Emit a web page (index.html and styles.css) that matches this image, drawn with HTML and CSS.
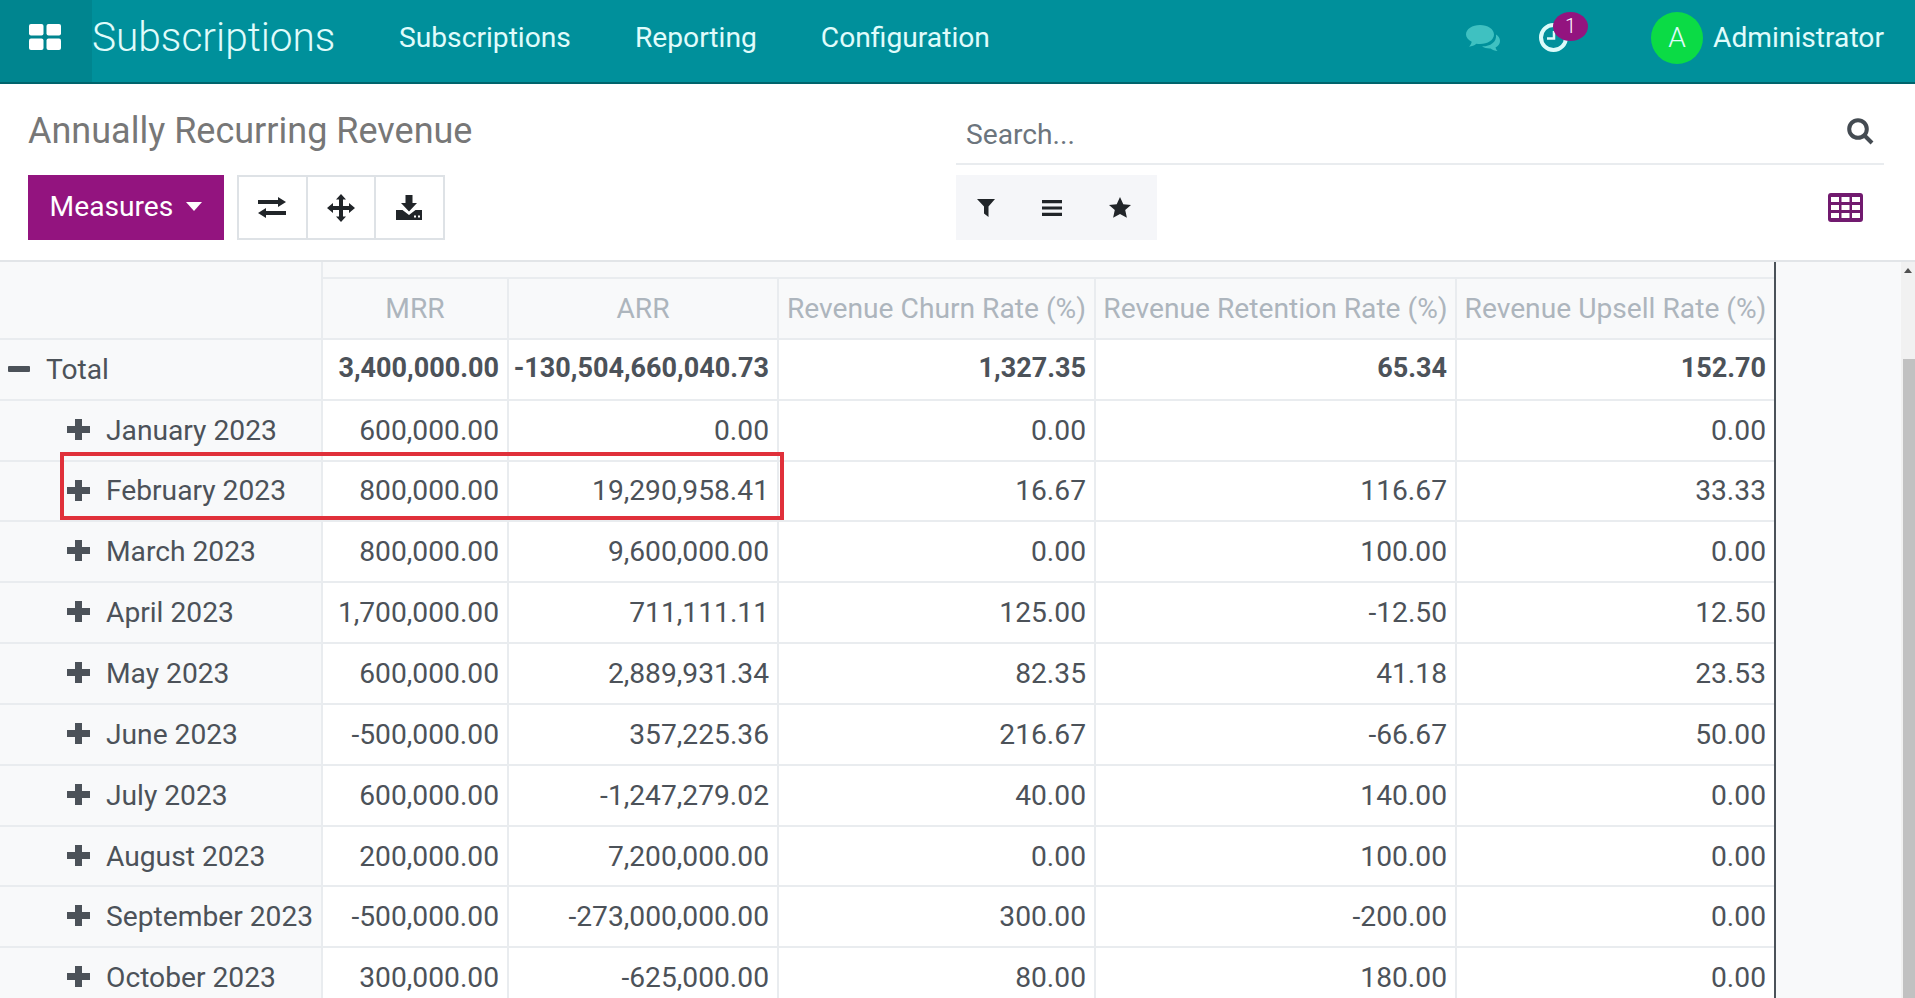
FILE: index.html
```html
<!DOCTYPE html>
<html lang="en">
<head>
<meta charset="utf-8">
<title>Annually Recurring Revenue</title>
<link rel="stylesheet" href="styles.css">
</head>
<body>
<header class="topbar">
  <div class="apps"><svg class="apps-icon" viewBox="0 0 32 26"><rect x="0" y="0" width="14.5" height="11.5" rx="2"/><rect x="17.5" y="0" width="14.5" height="11.5" rx="2"/><rect x="0" y="14.5" width="14.5" height="11.5" rx="2"/><rect x="17.5" y="14.5" width="14.5" height="11.5" rx="2"/></svg></div>
  <div class="brand">Subscriptions</div>
  <nav class="menu"><a>Subscriptions</a><a>Reporting</a><a>Configuration</a></nav>
  <div class="systray">
    <svg class="chat" viewBox="0 0 34 26"><path d="M14 0c7.700 0 14 4 14 9.600S21.700 19 14 19c-1.300 0-2.500-.1-3.700-.3C8.300 20.400 5.900 21.300 3 21.700c1.300-1.400 2.300-3 2.700-5C2.200 15 0 12.500 0 9.600 0 4 6.300 0 14 0z"/><path d="M30 9.500c2.500 1.600 4 3.900 4 6.500 0 2.800-1.700 5.100-4.500 6.600.3 1.400 1 2.500 2 3.400-2.700-.2-5-1.100-6.900-2.500-3.200.2-6.500-.6-8.600-2.200 7.500.3 15-3.700 14-11.800z"/></svg>
    <div class="activity">
      <svg class="clock" viewBox="0 0 29 29"><circle cx="14.500" cy="14.500" r="12.500"/><path d="M15 8v7.500H8"/></svg>
      <span class="badge">1</span>
    </div>
    <div class="avatar">A</div>
    <span class="username">Administrator</span>
  </div>
</header>

<section class="control-panel">
  <div class="cp-left">
    <h1 class="page-title">Annually Recurring Revenue</h1>
    <div class="buttons">
      <button class="measures">Measures<span class="caret"></span></button>
      <div class="btn-group">
        <button class="icon-btn"><svg class="ico-swap" viewBox="0 0 28 21"><path d="M0 3h20V0l8 5-8 5V7H0z"/><path d="M28 14H8v-3l-8 5 8 5v-3h20z"/></svg></button>
        <button class="icon-btn"><svg class="ico-move" viewBox="0 0 28 28"><path d="M14 0l5 5.500h-3V12h6V9l6 5-6 5v-3h-6v6.500h3L14 28l-5-5.500h3V16H6v3l-6-5 6-5v3h6V5.500H9z"/></svg></button>
        <button class="icon-btn"><svg class="ico-save" viewBox="0 0 26 25"><path d="M9.500 0h7v8H21l-8 8.500L5 8h4.500z"/><path d="M0 15h6.500l6.500 5 6.500-5H26v10H0z"/><rect x="18" y="20.500" width="2" height="2" fill="#fff"/><rect x="22" y="20.500" width="2" height="2" fill="#fff"/></svg></button>
      </div>
    </div>
  </div>
  <div class="cp-right">
    <div class="search">
      <span class="placeholder">Search...</span>
      <svg class="search-icon" viewBox="0 0 27 27"><circle cx="11" cy="11" r="8.800"/><path d="M17.500 17.500l7.500 7.500"/></svg>
    </div>
    <div class="cp-tools">
      <div class="filters">
        <svg class="ico-filter" viewBox="0 0 18 18"><path d="M0 0h18l-6.500 7.500V18L7 14.500v-7z"/></svg>
        <svg class="ico-bars" viewBox="0 0 20 16"><path d="M0 0h20v3.200H0zM0 6.400h20v3.200H0zM0 12.800h20V16H0z"/></svg>
        <svg class="ico-star" viewBox="0 0 22 21"><path d="M11 0l3.300 7.200 7.700.8-5.800 5.100 1.700 7.700L11 16.900 4.100 20.800l1.700-7.700L0 8l7.700-.8z"/></svg>
      </div>
      <svg class="view-icon" viewBox="0 0 35 29"><rect width="35" height="29" rx="3"/><g fill="#fff"><rect x="3" y="4" width="8" height="5"/><rect x="13.500" y="4" width="8" height="5"/><rect x="24" y="4" width="8" height="5"/><rect x="3" y="12" width="8" height="5"/><rect x="13.500" y="12" width="8" height="5"/><rect x="24" y="12" width="8" height="5"/><rect x="3" y="20" width="8" height="5"/><rect x="13.500" y="20" width="8" height="5"/><rect x="24" y="20" width="8" height="5"/></g></svg>
    </div>
  </div>
</section>

<main class="content">
  <div class="pivot-wrap">
    <table class="pivot">
      <colgroup><col class="c0"><col class="c1"><col class="c2"><col class="c3"><col class="c4"><col class="c5"></colgroup>
      <thead>
        <tr class="band"><th rowspan="2"></th><th colspan="5"></th></tr>
        <tr class="heads"><th>MRR</th><th>ARR</th><th>Revenue Churn Rate (%)</th><th>Revenue Retention Rate (%)</th><th>Revenue Upsell Rate (%)</th></tr>
      </thead>
      <tbody>
        <tr class="total"><th><span class="minus"></span>Total</th><td>3,400,000.00</td><td>-130,504,660,040.73</td><td>1,327.35</td><td>65.34</td><td>152.70</td></tr>
        <tr><th><span class="plus"></span>January 2023</th><td>600,000.00</td><td>0.00</td><td>0.00</td><td></td><td>0.00</td></tr>
        <tr><th><span class="plus"></span>February 2023</th><td>800,000.00</td><td>19,290,958.41</td><td>16.67</td><td>116.67</td><td>33.33</td></tr>
        <tr><th><span class="plus"></span>March 2023</th><td>800,000.00</td><td>9,600,000.00</td><td>0.00</td><td>100.00</td><td>0.00</td></tr>
        <tr><th><span class="plus"></span>April 2023</th><td>1,700,000.00</td><td>711,111.11</td><td>125.00</td><td>-12.50</td><td>12.50</td></tr>
        <tr><th><span class="plus"></span>May 2023</th><td>600,000.00</td><td>2,889,931.34</td><td>82.35</td><td>41.18</td><td>23.53</td></tr>
        <tr><th><span class="plus"></span>June 2023</th><td>-500,000.00</td><td>357,225.36</td><td>216.67</td><td>-66.67</td><td>50.00</td></tr>
        <tr><th><span class="plus"></span>July 2023</th><td>600,000.00</td><td>-1,247,279.02</td><td>40.00</td><td>140.00</td><td>0.00</td></tr>
        <tr><th><span class="plus"></span>August 2023</th><td>200,000.00</td><td>7,200,000.00</td><td>0.00</td><td>100.00</td><td>0.00</td></tr>
        <tr><th><span class="plus"></span>September 2023</th><td>-500,000.00</td><td>-273,000,000.00</td><td>300.00</td><td>-200.00</td><td>0.00</td></tr>
        <tr><th><span class="plus"></span>October 2023</th><td>300,000.00</td><td>-625,000.00</td><td>80.00</td><td>180.00</td><td>0.00</td></tr>
      </tbody>
    </table>
    <div class="highlight"></div>
  </div>
  <div class="scrollbar"><span class="arrow"></span><div class="thumb"></div></div>
</main>
</body>
</html>
```

FILE: styles.css
```css
* { box-sizing: border-box; }
html, body { margin: 0; height: 100%; overflow: hidden; }
body { font-family: Roboto, "Liberation Sans", sans-serif; font-size: 28.2px; color: #4c5259; background: #fff; display: flex; flex-direction: column; height: 998px; }

.topbar { height: 84px; flex: none; display: flex; align-items: center; background: #00909b; border-bottom: 2px solid #00646c; color: #e0fcfb; padding-bottom: 7px; }
.apps { width: 92px; height: 82px; margin-bottom: -7px; padding: 0 3px 9px 0; background: #00858f; display: flex; align-items: center; justify-content: center; flex: none; }
.apps-icon { width: 32px; height: 26px; fill: #fff; }
.brand { font-size: 40.6px; font-weight: 300; width: 307px; white-space: nowrap; margin-top: -2px; }
.menu { display: flex; gap: 64px; }
.systray { margin-left: auto; display: flex; align-items: center; padding-right: 31px; }
.chat { width: 34px; height: 26px; fill: #3fc1c1; margin-right: 38px; }
.activity { position: relative; width: 49px; height: 30px; margin-right: 63px; margin-left: 1px; }
.clock { width: 29px; height: 29px; fill: none; stroke: #dcfbfa; stroke-width: 4; display: block; }
.clock path { stroke-width: 2.500; }
.badge { position: absolute; left: 14px; top: -11px; width: 35px; height: 29px; border-radius: 50%; background: #93147f; font-size: 20px; font-weight: 300; display: flex; align-items: center; justify-content: center; color: #fff; }
.avatar { width: 52px; height: 52px; border-radius: 50%; background: #0bdb45; display: flex; align-items: center; justify-content: center; margin-right: 10px; font-weight: 300; }

.control-panel { height: 176px; flex: none; display: flex; justify-content: space-between; padding: 0 31px 0 28px; }
.cp-left { display: flex; flex-direction: column; }
.page-title { margin: 25px 0 0; height: 66px; font-size: 36px; font-weight: 400; color: #777; line-height: 44px; }
.buttons { display: flex; gap: 13px; }
.measures { width: 196px; height: 65px; border: 0; background: #93147f; color: #fff; font: 28.2px Roboto, sans-serif; display: flex; align-items: center; justify-content: center; gap: 13px; padding: 0 0 2px; }
.caret { width: 0; height: 0; border-left: 8px solid transparent; border-right: 8px solid transparent; border-top: 9px solid #fff; }
.btn-group { display: flex; }
.icon-btn { width: 70.500px; height: 65px; background: #fff; border: 2px solid #dee2e6; margin-left: -2px; display: flex; align-items: center; justify-content: center; padding: 0; }
.icon-btn:first-child { margin-left: 0; }
.icon-btn svg { fill: #212529; }
.ico-swap { width: 28px; height: 21px; }
.ico-move { width: 28px; height: 28px; }
.ico-save { width: 26px; height: 25px; }

.cp-right { width: 928px; display: flex; flex-direction: column; }
.search { height: 81px; border-bottom: 2px solid #e9ecef; display: flex; align-items: center; justify-content: space-between; padding: 21px 10px 0 10px; }
.placeholder { color: #6c757d; }
.search-icon { width: 27px; height: 27px; fill: none; stroke: #444b52; stroke-width: 4; margin-top: -6px; }
.cp-tools { margin-top: 10px; display: flex; justify-content: space-between; align-items: center; }
.filters { width: 201px; height: 65px; background: #f5f6f9; display: flex; align-items: center; padding-left: 21px; gap: 47px; }
.filters svg { fill: #212529; }
.ico-filter { width: 18px; height: 18px; }
.ico-bars { width: 20px; height: 16px; }
.ico-star { width: 22px; height: 21px; }
.view-icon { width: 35px; height: 29px; fill: #711a6f; margin-right: 21px; }

.content { flex: 1; min-height: 0; display: flex; border-top: 2px solid #e2e5e8; background: #f8f9fa; }
.pivot-wrap { position: relative; flex: 1; overflow: hidden; }
.pivot { table-layout: fixed; width: 1774px; border-collapse: separate; border-spacing: 0; border-right: 2px solid #4b5259; }
.c0 { width: 323px; } .c1 { width: 186px; } .c2 { width: 270px; } .c3 { width: 317px; } .c4 { width: 361px; } .c5 { width: 317px; }
.pivot th, .pivot td { padding: 0 8px; height: 60.850px; font-weight: 400; border-bottom: 2px solid #e9ecef; border-right: 2px solid #e9ecef; white-space: nowrap; text-align: right; }
.pivot td { background: #fff; }
.pivot th { background: #f8f9fa; }
.pivot tbody th { text-align: left; }
.pivot thead th:last-child, .pivot td:last-child { border-right: 0; }
.pivot .band th { height: 17px; padding: 0; }
.pivot .heads th { color: #adb5bd; text-align: center; padding: 0; }
.pivot .total td { font-weight: 700; font-size: 27px; padding: 0 8px 2px 2px; }
.pivot tbody th { padding-left: 106px; position: relative; }
.pivot .total th { padding-left: 46px; }
.plus { position: absolute; left: 67px; top: 18px; width: 23px; height: 21px; background: linear-gradient(#4c5259, #4c5259) center / 23px 7px no-repeat, linear-gradient(#4c5259, #4c5259) center / 7px 21px no-repeat; border-radius: 2px; }
.minus { position: absolute; left: 8px; top: 26px; width: 22px; height: 6px; background: #4c5259; border-radius: 1px; }
.highlight { position: absolute; left: 60px; top: 190px; width: 724px; height: 68px; border: 4px solid #e0303a; }

.scrollbar { width: 14px; background: #f1f1f1; position: relative; flex: none; }
.arrow { position: absolute; left: 3px; top: 6px; width: 0; height: 0; border-left: 4px solid transparent; border-right: 4px solid transparent; border-bottom: 5px solid #505050; }
.thumb { position: absolute; left: 2px; right: 0; top: 97px; bottom: 0; background: #c1c1c1; }
```
